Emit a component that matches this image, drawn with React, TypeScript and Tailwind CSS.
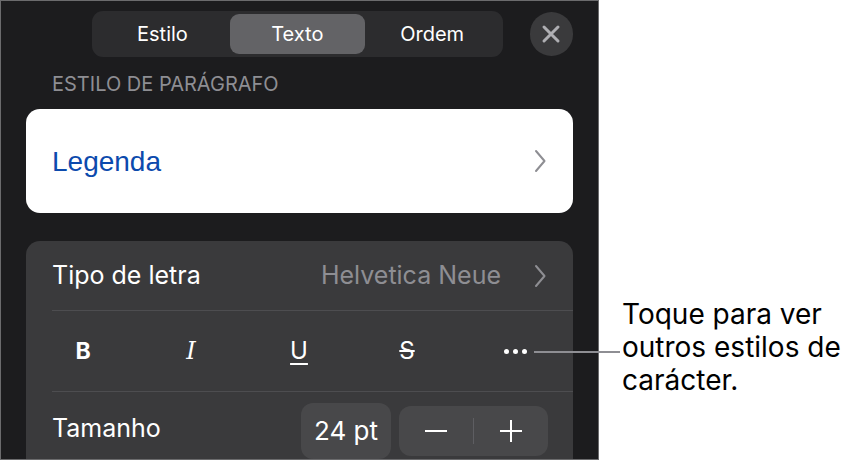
import React from 'react';

const ui = { fontFamily: 'Inter, "Liberation Sans", sans-serif' };

const Chevron = ({ className = '' }: { className?: string }) => (
  <svg width="14" height="26" viewBox="0 0 14 26" className={className} fill="none">
    <path d="M3 3l8.5 10L3 23" stroke="#8e8e93" strokeWidth="2" strokeLinecap="round" strokeLinejoin="round" />
  </svg>
);

const Segment = ({ label, active }: { label: string; active?: boolean }) => (
  <div
    className={`flex-1 flex items-center justify-center text-[20px] text-white rounded-[9px] ${
      active ? 'bg-[#636366]' : ''
    }`}
  >
    {label}
  </div>
);

export default function App() {
  return (
    <div className="relative w-[857px] h-[460px] bg-white flex overflow-hidden" style={ui}>
      {/* panel */}
      <div className="w-[599px] h-[460px] shrink-0 bg-[#1c1c1e] border border-[#6b6b6d] px-[25px] flex flex-col">
        <div className="flex items-center mt-[10px]">
          <div className="ml-[66px] w-[416px] h-[46px] rounded-[11px] bg-[#2c2c2e] flex p-[3px]">
            <Segment label="Estilo" />
            <Segment label="Texto" active />
            <Segment label="Ordem" />
          </div>
          <div className="ml-[27px] w-[44px] h-[44px] rounded-full bg-[#3a3a3c] flex items-center justify-center">
            <svg width="20" height="20" viewBox="0 0 20 20">
              <path d="M3 3l14 14M17 3L3 17" stroke="#aeaeb2" strokeWidth="3" strokeLinecap="round" />
            </svg>
          </div>
        </div>

        <div className="mt-[15px] ml-[26px] text-[20px] text-[#8e8e93] leading-[24px]">
          ESTILO DE PARÁGRAFO
        </div>

        <div className="mt-[13px] h-[104px] rounded-[14px] bg-white flex items-center pl-[26px] pr-[26px]">
          <span
            className="flex-1 text-[28px] text-[#0c4aad] pt-[2px]"
            style={{ fontFamily: '"Liberation Sans", Arial, sans-serif' }}
          >
            Legenda
          </span>
          <Chevron />
        </div>

        <div className="mt-[28px] flex-1 rounded-t-[14px] bg-[#3a3a3c] pl-[26px] flex flex-col">
          <div className="h-[70px] flex items-center pr-[26px] border-b border-[#4d4d50]">
            <span className="flex-1 text-[25px] text-white">Tipo de letra</span>
            <span className="text-[25px] text-[#8e8e93] mr-[32px]">Helvetica Neue</span>
            <Chevron />
          </div>
          <div className="h-[81px] flex items-center border-b border-[#4d4d50] text-white">
            <div className="w-[62px] text-center text-[23px] font-bold">B</div>
            <div
              className="ml-[46px] w-[62px] text-center text-[24px] italic"
              style={{ fontFamily: '"DejaVu Serif", serif' }}
            >
              I
            </div>
            <div className="ml-[46px] w-[62px] text-center text-[24px] underline underline-offset-[4px]">U</div>
            <div className="ml-[46px] w-[62px] text-center text-[24px] line-through">S</div>
            <div className="ml-[46px] w-[62px] flex justify-center gap-[4px]">
              <span className="w-[5px] h-[5px] rounded-full bg-white" />
              <span className="w-[5px] h-[5px] rounded-full bg-white" />
              <span className="w-[5px] h-[5px] rounded-full bg-white" />
            </div>
          </div>
          <div className="flex-1 flex items-center pr-[25px]">
            <span className="flex-1 text-[25px] text-white mt-[6px]">Tamanho</span>
            <div className="w-[90px] h-[56px] mt-[10px] rounded-[12px] bg-[#48484a] flex items-center justify-center text-[26px] text-white">
              24 pt
            </div>
            <div className="ml-[8px] w-[149px] h-[50px] mt-[10px] rounded-[12px] bg-[#48484a] flex items-center">
              <div className="flex-1 flex justify-center">
                <span className="w-[22px] h-[2px] bg-white" />
              </div>
              <span className="w-px h-[26px] bg-[#5e5e62]" />
              <div className="flex-1 flex justify-center relative h-[22px]">
                <span className="absolute top-[10px] w-[22px] h-[2px] bg-white" />
                <span className="w-[2px] h-[22px] bg-white" />
              </div>
            </div>
          </div>
        </div>
      </div>

      {/* callout */}
      <div className="pl-[23px] pt-[298px] text-[28px] leading-[33px] text-black">
        Toque para ver
        <br />
        outros estilos de
        <br />
        carácter.
      </div>
      <div className="absolute left-[534px] top-[351px] w-[86px] h-[2px] bg-[#8e8e93]" />
    </div>
  );
}
